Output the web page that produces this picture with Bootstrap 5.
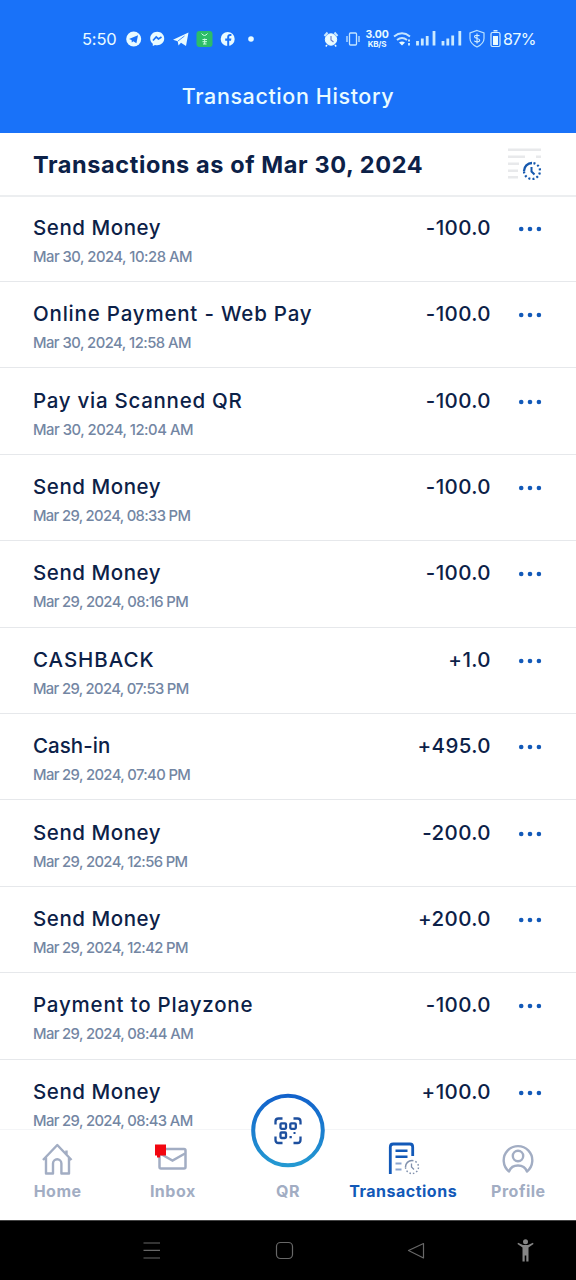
<!DOCTYPE html>
<html lang="en">
<head>
<meta charset="utf-8">
<meta name="viewport" content="width=device-width, initial-scale=1">
<title>Transaction History</title>
<link href="https://cdn.jsdelivr.net/npm/bootstrap@5.3.0/dist/css/bootstrap.min.css" rel="stylesheet">
<style>
body{font-family:Inter,"Liberation Sans",sans-serif;background:#fff;color:#0c2148;overflow:hidden;white-space:nowrap}
svg{display:block;flex:none;overflow:visible}
.screen{width:576px;height:1280px;overflow:hidden}
.topbar{height:133px;background:#1972f9;color:#e9fbff}
.status{height:78px;padding:0 42px 0 82px}
.clock{font:400 16.5px/20px Inter,sans-serif;letter-spacing:-.2px;width:34px}
.app-icons{margin-left:10px}
.rate{width:24px;margin:0 4px}
.rate div{font:700 10.5px/10px Inter,sans-serif;letter-spacing:-.2px}
.rate div:last-child{font-size:8px;line-height:9px}
.battery{font:400 16px/20px Inter,sans-serif;letter-spacing:-.6px;width:31px}
.page-title{font-size:21.5px;line-height:36px;font-weight:500;letter-spacing:.6px}
.asof{height:64px;padding:1px 34px 0 33px;border-bottom:2px solid #eceef0}
.asof h1{font-size:23.5px;line-height:32px;font-weight:700;letter-spacing:.6px;color:#0c2148}
.feed{height:932px;overflow:hidden}
.entry{flex:none;height:86.4px;padding:0 34px 16.2px 33px;border-bottom:1px solid #e6e8eb}
.entry:first-child{height:85px}
.entry:last-child{border:0;padding-bottom:17.4px}
.what{font-size:20.5px;line-height:28px;font-weight:500}
.when{font-size:14.8px;line-height:16px;font-weight:500;color:#7386a3;margin-top:7px}
.figures{height:51px}
.amount{font-size:20.5px;line-height:28px;font-weight:500;letter-spacing:.4px;margin-right:28px}
.more{height:29px}
.tabs{height:91px;background:#fff;border-top:1px solid #f4f5f7;position:relative;color:#a2adc3}
.tab{width:115.2px;padding-top:11px}
.tab svg{height:36px}
.tab span{font-size:16px;line-height:20px;font-weight:700;margin-top:4px;letter-spacing:.5px}
.tab .under-qr{margin-top:40px}
.tab.on{color:#1259b8}
.tab .qr{position:absolute;left:251px;top:-37px;height:74px}
.sysbar{height:60px;background:#000;border-top:1px solid #444}
.sysbar svg{width:576px;height:59px}
</style>
</head>
<body>
<div class="screen d-flex flex-column">
<header class="topbar flex-shrink-0">
<div class="status d-flex align-items-center">
<div class="clock">5:50</div>
<svg class="app-icons" width="128" height="20" viewBox="126 29 128 20">
<circle cx="133.700" cy="39" r="7.500" fill="#e9fbff"/><path d="M129 39l9-3.800-1.600 8-3.100-2-1.500 1.400-.2-2.500z" fill="#1972f9"/>
<path d="M157.200 31.800c4 0 7 2.900 7 6.700s-3 6.700-7 6.700c-.8 0-1.500-.1-2.200-.3l-2.200 1.200v-2.400c-1.600-1.300-2.600-3.100-2.600-5.200 0-3.800 3-6.700 7-6.700z" fill="#e9fbff"/><path d="M153 40.500l3.200-3.500 2.300 2 3-2" fill="none" stroke="#1972f9" stroke-width="1.700"/>
<path d="M173 39.800L188.500 32.500 186 46l-5-3.200-2.500 2.800-.8-4.300z" fill="#e9fbff"/><path d="M178 41l6.500-5" stroke="#1972f9" stroke-width=".8"/>
<rect x="196.500" y="31" width="16" height="16" rx="3" fill="#2cbd68"/><path d="M201.500 33.500q3 4 6 0M202.500 39.500h4.500M204.700 38.500v5.500M202.500 41.700h4.500M203 44h3.500" stroke="#c9ffe2" stroke-width="1" fill="none"/>
<circle cx="227.700" cy="39" r="7" fill="#e9fbff"/><path d="M227.200 46v-5.300h-2v-2.200h2v-1.600c0-2 1.200-3 3-3h1.200v2h-1c-1 0-1.200.5-1.200 1.200v1.400h2.200l-.4 2.200h-1.800V46z" fill="#1972f9"/>
<circle cx="251" cy="39" r="2.800" fill="#e9fbff"/>
</svg>
<svg width="38" height="20" viewBox="323 29 38 20" class="ms-auto">
<circle cx="331" cy="39.500" r="5.700" fill="#e9fbff" stroke="#e9fbff"/><path d="M324.500 36l3-3.500M337.500 36l-3-3.500" stroke="#c4e5ff" stroke-width="2"/><path d="M331 36v4l2.500 2" fill="none" stroke="#7180c8" stroke-width="1.200"/><path d="M327 45l-1.200 1.500M335 45l1.200 1.500" stroke="#e9fbff" stroke-width="1.500"/>
<rect x="349.500" y="33" width="7" height="12" rx="1" fill="none" stroke="#c4e5ff" stroke-width="1.300"/><path d="M347 36v6M359 36v6" stroke="#c4e5ff" stroke-width="1.300"/>
</svg>
<div class="rate text-center"><div>3.00</div><div>KB/S</div></div>
<svg width="110" height="20" viewBox="394 29 110 20">
<path d="M395 36.500q8-6.500 16 0M398 40q5-4 10 0" fill="none" stroke="#c4e5ff" stroke-width="1.900"/><path d="M400 42.500q3-2 6 0l-3 3z" fill="#e9fbff"/><path d="M410 39.500v2M410 43v2.500" stroke="#c4e5ff" stroke-width="2"/>
<path d="M418.500 45.500v-4.500M423.300 45.500v-7M428.200 45.500v-9.500M435 45.500V31M444 45.500v-4.500M448.800 45.500v-7M453.700 45.500v-10M460.800 45.500V31" stroke="#cbeaff" stroke-width="2.800"/>
<path d="M478 30.500l7 2.500v5.500c0 4-3 6.500-7 8.500-4-2-7-4.500-7-8.500V33z" fill="none" stroke="#b9e1ff" stroke-width="1.200"/><path d="M480.500 36c-.5-1-5-1.300-5 .8 0 2.300 5.200 1 5.200 3.500 0 2-4.500 2-5.400.5M478 33.500v10" fill="none" stroke="#d3efff" stroke-width="1.100"/>
<rect x="492" y="32.500" width="9" height="14" rx="1.500" fill="none" stroke="#d3efff" stroke-width="1.200"/><path d="M494.500 30.800h4" stroke="#d3efff" stroke-width="1.500"/><rect x="494" y="36" width="5" height="9" fill="#e9fbff"/>
</svg>
<div class="battery">87%</div>
</div>
<div class="page-title text-center">Transaction History</div>
</header>
<div class="asof d-flex align-items-center justify-content-between flex-shrink-0">
<h1 class="m-0">Transactions as of Mar 30, 2024</h1>
<svg width="34" height="34" viewBox="508 148 34 34"><g fill="none"><path d="M508 149.700h33M508 156.700h17M536 156.700h5M508 163.700h11M508 170.700h10M508 177.300h10" stroke="#e8e9eb" stroke-width="2.600"/><path d="M524 171a8 8 0 0 1 8-8" stroke="#1558ae" stroke-width="2.300"/><path d="M532 163a8 8 0 1 1-8 8" stroke="#1558ae" stroke-width="2.200" stroke-dasharray="2 2.200" stroke-dashoffset="-1.500"/><path d="M531.500 167v4.500l3 3" stroke="#1558ae" stroke-width="2"/></g></svg>
</div>
<main class="feed d-flex flex-column" id="feed"></main>
<nav class="tabs d-flex flex-shrink-0">
<div class="tab d-flex flex-column align-items-center"><svg width="34" viewBox="41 1141 34 36"><path d="M43 1160L57.300 1145 71.500 1160M46 1157.500V1173.500H53V1163.500a4.200 4.200 0 0 1 8.400 0V1173.500H69V1157.500M66.500 1154.500v-4" fill="none" stroke="currentColor" stroke-width="2.400" stroke-linejoin="round"/></svg><span>Home</span></div>
<div class="tab d-flex flex-column align-items-center"><svg width="34" viewBox="156 1141 34 36"><rect x="159.500" y="1149" width="26" height="19.500" rx="1.500" fill="none" stroke="currentColor" stroke-width="2.500"/><path d="M160 1153.500l12.500 7 12.500-7" fill="none" stroke="currentColor" stroke-width="2.400"/><path d="M155 1144.500h11v11h-6v2h-3v-2h-2z" fill="#f20610"/></svg><span>Inbox</span></div>
<div class="tab d-flex flex-column align-items-center"><svg class="qr" width="74" viewBox="251 1093 74 74"><defs><linearGradient id="ring" x2="0" y2="1"><stop stop-color="#1262cb"/><stop offset="1" stop-color="#2499d2"/></linearGradient></defs><circle cx="288" cy="1130.500" r="34.800" fill="#fff" stroke="url(#ring)" stroke-width="4"/><g fill="none" stroke="#1d4f9e" stroke-width="2.300"><path d="M275.500 1124.500v-3q0-3 3-3h4M293.500 1118.500h4q3 0 3 3v3M300.500 1136.500v3.500q0 3-3 3h-4M282.500 1143h-4q-3 0-3-3v-3.500"/><rect x="280.500" y="1123.300" width="5.500" height="5.500" rx="1"/><rect x="290.300" y="1123.300" width="5.500" height="5.500" rx="1"/><rect x="280.500" y="1132.500" width="5.500" height="5.500" rx="1"/></g><path d="M293.500 1132h2v2h-2zM289.500 1136h2.300v2.300h-2.300z" fill="#1d4f9e"/></svg><span class="under-qr">QR</span></div>
<div class="tab on d-flex flex-column align-items-center"><svg width="34" viewBox="386 1141 34 36"><g fill="none"><path d="M390.300 1174V1147q0-3 3-3H410q2.700 0 2.700 3v9" stroke="#1259b8" stroke-width="2.800"/><path d="M395.500 1150.800h12M395.500 1156.800h12" stroke="#1259b8" stroke-width="2.500"/><path d="M395.500 1163.500h6M395.500 1169.500h6" stroke="#8ca5cf" stroke-width="2"/><path d="M405.500 1167a6.500 6.500 0 0 1 6.500-6.500" stroke="#8191ad" stroke-width="1.500"/><path d="M412 1160.500a6.500 6.500 0 1 1-6.500 6.500" stroke="#8191ad" stroke-width="1.500" stroke-dasharray="1.500 2"/><path d="M411.500 1163.500v3.500l2.500 2.500" stroke="#8191ad" stroke-width="1.300"/></g></svg><span>Transactions</span></div>
<div class="tab d-flex flex-column align-items-center"><svg width="34" viewBox="501 1141 34 36"><g fill="none" stroke="currentColor" stroke-width="2.400"><circle cx="518" cy="1156" r="5.200"/><path d="M509 1171.500A14.300 14.300 0 1 1 527 1171.500C524 1163.500 512 1163.500 509 1171.500z" stroke-linejoin="round"/></g></svg><span>Profile</span></div>
</nav>
<footer class="sysbar flex-shrink-0"><svg viewBox="0 1221 576 59"><g fill="none" stroke="#686868" stroke-width="1.200"><path d="M143.500 1243h16.500M143.500 1250.300h16.500M143.500 1258h16.500"/><rect x="276.500" y="1242.500" width="16" height="16" rx="4"/><path d="M423.500 1243.500v14.500l-15-7.500z" stroke-linejoin="round"/></g><g fill="#858585"><circle cx="525.500" cy="1241.700" r="2.500"/><path d="M517.500 1244l.5-1.300 5 2.300h5l5-2.300.5 1.300-5 3.500V1261.500h-2.200v-6h-1.600v6h-2.200V1247.500z"/></g></svg></footer>
</div>
<script>
// Each entry: title, time, amount, letter spacing of the title and of the time (px)
const entries = [
  ["Send Money","Mar 30, 2024, 10:28 AM","-100.0",.55,-.5],
  ["Online Payment - Web Pay","Mar 30, 2024, 12:58 AM","-100.0",.8,-.52],
  ["Pay via Scanned QR","Mar 30, 2024, 12:04 AM","-100.0",.72,-.47],
  ["Send Money","Mar 29, 2024, 08:33 PM","-100.0",.55,-.66],
  ["Send Money","Mar 29, 2024, 08:16 PM","-100.0",.55,-.62],
  ["CASHBACK","Mar 29, 2024, 07:53 PM","+1.0",.95,-.66],
  ["Cash-in","Mar 29, 2024, 07:40 PM","+495.0",.05,-.62],
  ["Send Money","Mar 29, 2024, 12:56 PM","-200.0",.55,-.62],
  ["Send Money","Mar 29, 2024, 12:42 PM","+200.0",.55,-.62],
  ["Payment to Playzone","Mar 29, 2024, 08:44 AM","-100.0",.8,-.62],
  ["Send Money","Mar 29, 2024, 08:43 AM","+100.0",.55,-.62]
];
document.getElementById("feed").innerHTML = entries.map(([what, when, amount, a, b]) => `
<div class="entry d-flex align-items-end"><div class="me-auto"><div class="what" style="letter-spacing:${a}px">${what}</div><div class="when" style="letter-spacing:${b}px">${when}</div></div>
<div class="figures d-flex align-items-start"><div class="amount">${amount}</div>
<svg class="more" width="23" viewBox="0 0 23 29"><g fill="#1259b8"><circle cx="2.200" cy="15" r="2.300"/><circle cx="11" cy="15" r="2.300"/><circle cx="19.900" cy="15" r="2.300"/></g></svg></div></div>`).join("");
</script>
<script src="https://cdn.jsdelivr.net/npm/bootstrap@5.3.0/dist/js/bootstrap.bundle.min.js"></script>
</body>
</html>
